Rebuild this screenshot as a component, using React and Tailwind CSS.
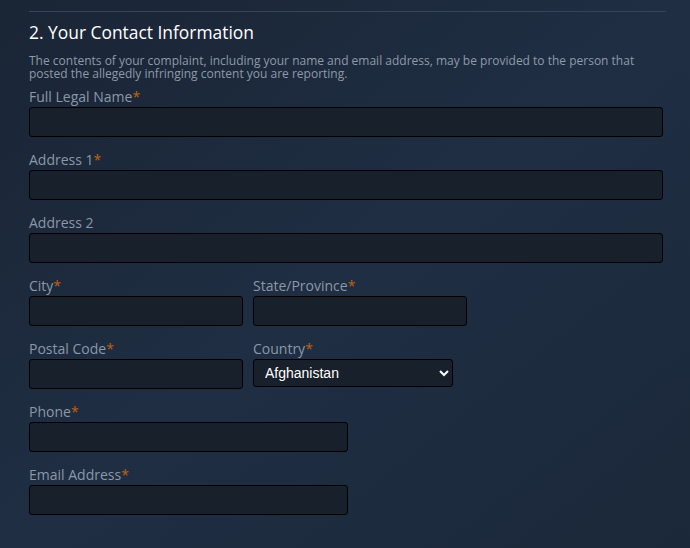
import React from "react";

const Label = ({ text }) => (
  <label className="block h-5 text-[14px] leading-5 text-[#8b98a7]">
    {text}
    <span className="text-[#c0610e]">*</span>
  </label>
);

const Field = ({ label, required = true, width = "w-full" }) => (
  <div className="mb-[13px]">
    {required ? (
      <Label text={label} />
    ) : (
      <label className="block h-5 text-[14px] leading-5 text-[#8b98a7]">{label}</label>
    )}
    <input
      type="text"
      className={`${width} block h-[30px] rounded-[3px] border border-[#000000] bg-[#18202c] px-2 text-[14px] text-white outline-none`}
    />
  </div>
);

export default function App() {
  return (
    <div
      className="min-h-[548px] w-[690px] bg-gradient-to-br from-[#1a2535] via-[#1f2e43] to-[#1b283a] px-[29px] pt-[11px]"
      style={{ fontFamily: '"Open Sans", "Liberation Sans", sans-serif' }}
    >
      <div className="w-[637px] border-t border-[#35465b]" />

      {/* heading */}
      <h2 className="mt-[8px] h-[25px] text-[17.4px] leading-[25px] text-white">
        2. Your Contact Information
      </h2>

      <p className="mt-[9px] w-[620px] text-[12px] leading-[13px] text-[#8d9aa8]">
        The contents of your complaint, including your name and email address, may be provided to the person that
        posted the allegedly infringing content you are reporting.
      </p>

      <div className="mt-[7px]">
        <Field label="Full Legal Name" width="w-[634px]" />
        <Field label="Address 1" width="w-[634px]" />
        <Field label="Address 2" required={false} width="w-[634px]" />

        <div className="flex gap-[10px]">
          <Field label="City" width="w-[214px]" />
          <Field label="State/Province" width="w-[214px]" />
        </div>

        <div className="flex gap-[10px]">
          <Field label="Postal Code" width="w-[214px]" />
          <div className="mb-[13px]">
            <Label text="Country" />
            <select
              className="block h-[28px] w-[200px] rounded-[3px] border border-[#000000] bg-[#18202c] pl-[7px] pr-1 text-[14px] text-white outline-none"
              style={{ fontFamily: '"Liberation Sans", Arial, sans-serif' }}
              defaultValue="Afghanistan"
            >
              <option>Afghanistan</option>
              <option>Albania</option>
              <option>Algeria</option>
            </select>
          </div>
        </div>

        <Field label="Phone" width="w-[319px]" />
        <Field label="Email Address" width="w-[319px]" />
      </div>
    </div>
  );
}
